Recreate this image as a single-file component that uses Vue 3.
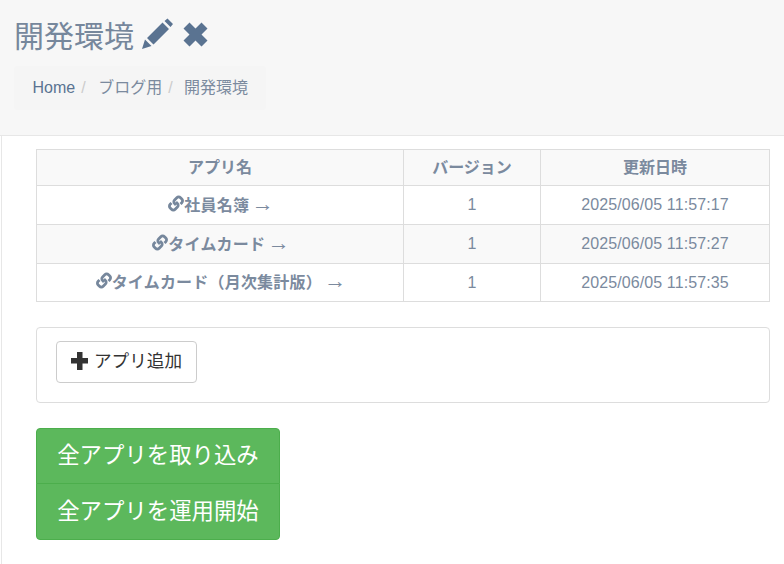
<script setup>
const rows = [
  { id: 'a', label: '社員名簿', version: 1, date: '2025/06/05 11:57:17' },
  { id: 'b', label: 'タイムカード', version: 1, date: '2025/06/05 11:57:27' },
  { id: 'c', label: 'タイムカード（月次集計版）', version: 1, date: '2025/06/05 11:57:35' }
]
const groupActions = ['全アプリを取り込み', '全アプリを運用開始']
</script>

<template>
  <div class="page">
    <header class="head">
      <h1 class="title">
        <span>開発環境</span>
        <svg class="pencil" viewBox="0 0 32 32" width="32" height="32"><path d="M0 31l3-9.500 6.500 6.500zM5 20L20.500 4.500 27 11 11.500 26.500zM22.500 3L25.500 0.500 31 6 28.500 9z" fill="#5a7391"/></svg>
        <svg class="cross" viewBox="0 0 25 25" width="25" height="25"><path d="M6.500 0.500L12.500 6.500 18.500 0.500 24.500 6.500 18.500 12.500 24.500 18.500 18.500 24.500 12.500 18.500 6.500 24.500 0.500 18.500 6.500 12.500 0.500 6.500z" fill="#5a7391"/></svg>
      </h1>
      <nav class="crumbs">
        <a class="crumb-link">Home</a><span class="sep">/</span>
        <span class="crumb-text">ブログ用</span><span class="sep">/</span>
        <span class="crumb-text last">開発環境</span>
      </nav>
    </header>
    <main class="body">
      <table class="apps">
        <colgroup><col class="c1" /><col class="c2" /><col class="c3" /></colgroup>
        <thead>
          <tr><th>アプリ名</th><th>バージョン</th><th>更新日時</th></tr>
        </thead>
        <tbody>
          <tr v-for="r in rows" :key="r.id">
            <td class="app">
              <svg class="link" viewBox="0 0 16 16" width="16" height="17"><g fill="none" stroke="#76879c" stroke-width="2.800"><path d="M8 9.500L6.600 8.100a2.600 2.600 0 0 1 0-3.700L8.800 2.200a2.600 2.600 0 0 1 3.700 0l1.300 1.300a2.600 2.600 0 0 1 0 3.700L12.500 8.500"/><path d="M8 6.500L9.400 7.900a2.600 2.600 0 0 1 0 3.700L7.200 13.800a2.600 2.600 0 0 1-3.700 0l-1.300-1.300a2.600 2.600 0 0 1 0-3.700L3.500 7.500"/></g></svg><span class="label">{{ r.label }}</span> <span class="arrow">→</span>
            </td>
            <td>{{ r.version }}</td>
            <td class="date">{{ r.date }}</td>
          </tr>
        </tbody>
      </table>
      <section class="panel">
        <button class="add" type="button">
          <svg class="plus" viewBox="0 0 17 18" width="17" height="18"><path d="M6 0h5.500v6H17v5.500h-5.500V18H6v-6.500H0V6h6z" fill="#333"/></svg>
          <span class="add-text">アプリ追加</span>
        </button>
      </section>
      <div class="group">
        <button v-for="a in groupActions" :key="a" class="go" type="button">{{ a }}</button>
      </div>
    </main>
  </div>
</template>

<style>
html, body { margin: 0; background: #fff; }
</style>

<style scoped>
.page {
  width: 784px;
  height: 564px;
  overflow: hidden;
  font-family: "Liberation Sans", "Noto Sans CJK JP", sans-serif;
  font-size: 16px;
  color: #7b8a9e;
  background: #fff;
}
.head {
  height: 136px;
  box-sizing: border-box;
  background: #f7f7f7;
  border-bottom: 1px solid #e7e7e7;
  padding: 14px 0 0 14px;
}
.title {
  display: flex;
  align-items: center;
  margin: 0;
  height: 40px;
  font-size: 30px;
  font-weight: 400;
  color: #76879c;
}
.pencil { margin-left: 8px; }
.cross { margin-left: 9px; }
.crumbs {
  display: inline-block;
  margin-top: 12px;
  padding: 10px 17px 10px 18.500px;
  height: 24px;
  line-height: 24px;
  background: #f5f5f5;
  border-radius: 4px;
}
.crumb-link { color: #5a7391; }
.crumb-text { color: #7b8a9e; }
.crumb-text.last { margin-left: -1px; margin-right: 1px; }
.sep { color: #ccc; padding: 0 12.500px 0 6px; }
.body {
  margin-left: 1px;
  border-left: 1px solid #e7e7e7;
  padding: 13px 14px 0 34px;
  height: 428px;
}
.apps {
  width: 734px;
  table-layout: fixed;
  border-collapse: collapse;
  text-align: center;
}
.c1 { width: 367px; }
.c2 { width: 137px; }
th, td { border: 1px solid #ddd; font-size: 16px; }
th { padding: 0 0 3px; box-sizing: border-box; height: 36px; background: #f9f9f9; font-weight: 700; }
td { height: 38px; padding: 0; }
tbody tr:last-child td { height: 37px; }
tbody tr:nth-child(even) td { background: #f9f9f9; }
.app { font-weight: 700; padding-bottom: 3px; box-sizing: border-box; height: 39px; }
tbody tr:first-child .app { padding-bottom: 2px; }
tbody tr:last-child .app { height: 38px; }
.label { letter-spacing: 0.200px; }
.date { letter-spacing: 0.100px; }
.link { vertical-align: -1px; }
.arrow { font-weight: 400; font-size: 22px; margin-left: -2px; margin-right: -2px; line-height: 16px; }
.panel {
  margin-top: 25px;
  height: 76px;
  box-sizing: border-box;
  border: 1px solid #ddd;
  border-radius: 4px;
  padding: 13px 19px;
  background: #fff;
}
.add {
  display: flex;
  align-items: center;
  gap: 6px;
  width: 141px;
  height: 42px;
  box-sizing: border-box;
  padding: 0 14px;
  background: #fff;
  border: 1px solid #ccc;
  border-radius: 4px;
  color: #333;
  font: inherit;
  font-size: 17.600px;
  white-space: nowrap;
}
.plus { margin-bottom: 2px; }
.add-text { padding-bottom: 5px; }
.group {
  display: flex;
  flex-direction: column;
  width: 244px;
  margin-top: 25px;
}
.go {
  height: 56px;
  padding: 0 0 6px;
  border: 1px solid #4cae4c;
  background: #5cb85c;
  color: #fff;
  font: inherit;
  font-size: 22.400px;
}
.go:first-child { border-radius: 4px 4px 0 0; }
.go:last-child { border-radius: 0 0 4px 4px; margin-top: -1px; height: 57px; }
</style>
